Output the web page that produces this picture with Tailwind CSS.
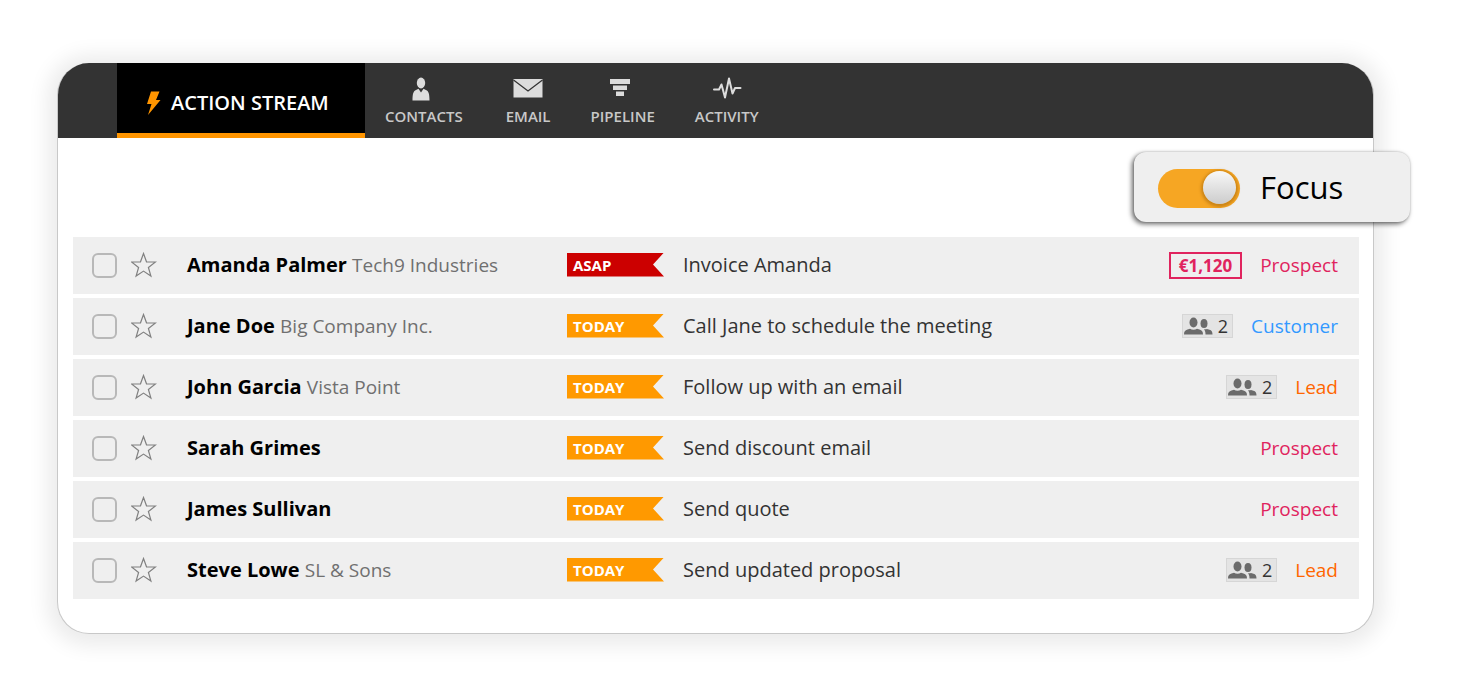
<!DOCTYPE html>
<html lang="en">
<head>
    <meta charset="UTF-8">
    <meta name="viewport" content="width=device-width, initial-scale=1">
    <title>Action Stream</title>
    <script src="https://cdn.jsdelivr.net/npm/@tailwindcss/browser@4"></script>
</head>
<body class="bg-white font-['Open_Sans',sans-serif] text-black pt-[63px] pb-[61px] pl-[57px] pr-[87px]">

    <!-- Shared icons -->
    <svg class="hidden">
        <symbol id="star" viewBox="0 0 26 26">
            <path fill="none" stroke="currentColor" stroke-width="1.2" stroke-linejoin="miter" d="M12.500 1.500l3 8.300 9 .2-7.100 5.500 2.500 8.500-7.400-4.900-7.400 4.900 2.500-8.500L.500 10l9-.2z" />
        </symbol>
        <symbol id="people" viewBox="0 0 29 18">
            <ellipse cx="9.500" cy="5.500" rx="4" ry="5" />
            <ellipse cx="20" cy="6.500" rx="3.500" ry="4.500" />
            <path d="M0 17.500c0-3 1-4.300 3.500-5l2.500-.8c2 1.500 5 1.500 7 0l2.500.8c2.500.7 3.500 2 3.500 5z" />
            <path d="M21.500 17.500c0-2.500-.5-4-1.500-5.300 1 .3 2 .2 3-.3l2.500.8c2 .6 3 2 3 4.800z" />
        </symbol>
    </svg>

    <main class="relative">
        <div class="overflow-hidden rounded-[32px] border border-[#c8c8c8] border-t-0 bg-white shadow-[0_2px_20px_10px_rgba(0,0,0,0.08)]">

            <!-- Top navigation -->
            <nav class="flex h-[75px] bg-[#333333] pl-[59px] text-[15px] leading-5 font-semibold text-[#c8c8c8]">
                <a href="#" class="flex w-[248px] items-center border-b-5 border-[#ff9500] bg-black pt-2.5 pl-7 text-xl text-white">
                    <svg class="mr-2 h-6 w-[18px]" viewBox="0 0 18 24" fill="#ff9500">
                        <path d="M6 0.500H14.500L11 9H15.500L3 24L6.500 13H2z" />
                    </svg>
                    <span>ACTION STREAM</span>
                </a>
                <a href="#" class="ml-5 flex flex-col items-center pt-3">
                    <svg class="mr-1.5 h-7 w-[30px]" viewBox="0 0 30 28" fill="#dcdcdc">
                        <ellipse cx="15" cy="8" rx="4.200" ry="5.400" />
                        <path d="M6.500 25.500c0-7 1-9.500 3.500-10.500l2.500-1.200L15 17.500l2.500-3.700L20 15c2.500 1 3.500 3.500 3.500 10.500z" />
                    </svg>
                    <span class="mt-[3px]">CONTACTS</span>
                </a>
                <a href="#" class="ml-[43px] flex flex-col items-center pt-3">
                    <svg class="h-7 w-[30px]" viewBox="0 0 30 28">
                        <path fill="#dcdcdc" d="M.5 4h29v18.500h-29z" />
                        <path fill="none" stroke="#333333" stroke-width="1.300" d="M.5 5L15 16 29.500 5" />
                    </svg>
                    <span class="mt-[3px]">EMAIL</span>
                </a>
                <a href="#" class="ml-10 flex flex-col items-center pt-3">
                    <svg class="mr-1.5 h-7 w-[30px]" viewBox="0 0 30 28" fill="#dcdcdc">
                        <path d="M5 4h20v5H5zM8 10.500h14v4.500H8zM11 16.500h8v4.500h-8z" />
                    </svg>
                    <span class="mt-[3px]">PIPELINE</span>
                </a>
                <a href="#" class="ml-10 flex flex-col items-center pt-3">
                    <svg class="h-7 w-[30px]" viewBox="0 0 30 28" fill="none" stroke="#dcdcdc" stroke-width="2" stroke-linejoin="round" stroke-linecap="round">
                        <path d="M2 14.500h5l2.500-5 3.500 13 4-19 3.500 15 2.500-5.500h5.500" />
                    </svg>
                    <span class="mt-[3px]">ACTIVITY</span>
                </a>
            </nav>

            <!-- Stream -->
            <ul class="flex flex-col gap-1 pt-[99px] pr-3.5 pb-[34px] pl-[15px] text-xl">
                <li class="flex h-[57px] items-center bg-[#efefef] pr-[21px] pb-0.5 pl-[19px]">
                    <input type="checkbox" aria-label="Select Amanda Palmer" class="mt-0.5 size-[25px] appearance-none rounded-md border-2 border-[#b8b8b8] checked:bg-[#b8b8b8]">
                    <button type="button" aria-label="Star Amanda Palmer" class="ml-3.5 text-[#808080]"><svg class="size-[26px]"><use href="#star" /></svg></button>
                    <div class="ml-[30px] w-[380px] shrink-0"><span class="font-bold">Amanda Palmer</span> <span class="text-[19px] text-[#707070]">Tech9 Industries</span></div>
                    <span class="h-6 w-[97px] shrink-0 bg-[#cc0000] pl-1.5 text-[15px] leading-6 font-bold text-white [clip-path:polygon(0_0,100%_0,86px_50%,100%_100%,0_100%)]">ASAP</span>
                    <span class="ml-[19px] flex-1 text-[#333333]">Invoice Amanda</span>
                    <span class="mt-0.5 mr-[18px] border-2 border-[#e0245e] px-2 text-[17px] leading-[23px] font-bold text-[#e0245e]">€1,120</span>
                    <span class="pt-0.5 text-[19px] text-[#e0245e]">Prospect</span>
                </li>
                <li class="flex h-[57px] items-center bg-[#efefef] pr-[21px] pb-0.5 pl-[19px]">
                    <input type="checkbox" aria-label="Select Jane Doe" class="mt-0.5 size-[25px] appearance-none rounded-md border-2 border-[#b8b8b8] checked:bg-[#b8b8b8]">
                    <button type="button" aria-label="Star Jane Doe" class="ml-3.5 text-[#808080]"><svg class="size-[26px]"><use href="#star" /></svg></button>
                    <div class="ml-[30px] w-[380px] shrink-0"><span class="font-bold">Jane Doe</span> <span class="text-[19px] text-[#707070]">Big Company Inc.</span></div>
                    <span class="h-6 w-[97px] shrink-0 bg-[#ff9900] pl-1.5 text-[15px] leading-6 font-bold text-white [clip-path:polygon(0_0,100%_0,86px_50%,100%_100%,0_100%)]">TODAY</span>
                    <span class="ml-[19px] flex-1 text-[#333333]">Call Jane to schedule the meeting</span>
                    <span class="mr-[18px] flex h-6 items-center border border-[#d6d6d6] bg-[#e4e4e4] pr-1 pl-px text-lg text-[#333333]"><svg class="mr-[5px] h-[18px] w-[29px]" fill="#6b6b6b"><use href="#people" /></svg>2</span>
                    <span class="pt-0.5 text-[19px] text-[#3399ff]">Customer</span>
                </li>
                <li class="flex h-[57px] items-center bg-[#efefef] pr-[21px] pb-0.5 pl-[19px]">
                    <input type="checkbox" aria-label="Select John Garcia" class="mt-0.5 size-[25px] appearance-none rounded-md border-2 border-[#b8b8b8] checked:bg-[#b8b8b8]">
                    <button type="button" aria-label="Star John Garcia" class="ml-3.5 text-[#808080]"><svg class="size-[26px]"><use href="#star" /></svg></button>
                    <div class="ml-[30px] w-[380px] shrink-0"><span class="font-bold">John Garcia</span> <span class="text-[19px] text-[#707070]">Vista Point</span></div>
                    <span class="h-6 w-[97px] shrink-0 bg-[#ff9900] pl-1.5 text-[15px] leading-6 font-bold text-white [clip-path:polygon(0_0,100%_0,86px_50%,100%_100%,0_100%)]">TODAY</span>
                    <span class="ml-[19px] flex-1 text-[#333333]">Follow up with an email</span>
                    <span class="mr-[18px] flex h-6 items-center border border-[#d6d6d6] bg-[#e4e4e4] pr-1 pl-px text-lg text-[#333333]"><svg class="mr-[5px] h-[18px] w-[29px]" fill="#6b6b6b"><use href="#people" /></svg>2</span>
                    <span class="pt-0.5 text-[19px] text-[#ff6600]">Lead</span>
                </li>
                <li class="flex h-[57px] items-center bg-[#efefef] pr-[21px] pb-0.5 pl-[19px]">
                    <input type="checkbox" aria-label="Select Sarah Grimes" class="mt-0.5 size-[25px] appearance-none rounded-md border-2 border-[#b8b8b8] checked:bg-[#b8b8b8]">
                    <button type="button" aria-label="Star Sarah Grimes" class="ml-3.5 text-[#808080]"><svg class="size-[26px]"><use href="#star" /></svg></button>
                    <div class="ml-[30px] w-[380px] shrink-0"><span class="font-bold">Sarah Grimes</span></div>
                    <span class="h-6 w-[97px] shrink-0 bg-[#ff9900] pl-1.5 text-[15px] leading-6 font-bold text-white [clip-path:polygon(0_0,100%_0,86px_50%,100%_100%,0_100%)]">TODAY</span>
                    <span class="ml-[19px] flex-1 text-[#333333]">Send discount email</span>
                    <span class="pt-0.5 text-[19px] text-[#e0245e]">Prospect</span>
                </li>
                <li class="flex h-[57px] items-center bg-[#efefef] pr-[21px] pb-0.5 pl-[19px]">
                    <input type="checkbox" aria-label="Select James Sullivan" class="mt-0.5 size-[25px] appearance-none rounded-md border-2 border-[#b8b8b8] checked:bg-[#b8b8b8]">
                    <button type="button" aria-label="Star James Sullivan" class="ml-3.5 text-[#808080]"><svg class="size-[26px]"><use href="#star" /></svg></button>
                    <div class="ml-[30px] w-[380px] shrink-0"><span class="font-bold">James Sullivan</span></div>
                    <span class="h-6 w-[97px] shrink-0 bg-[#ff9900] pl-1.5 text-[15px] leading-6 font-bold text-white [clip-path:polygon(0_0,100%_0,86px_50%,100%_100%,0_100%)]">TODAY</span>
                    <span class="ml-[19px] flex-1 text-[#333333]">Send quote</span>
                    <span class="pt-0.5 text-[19px] text-[#e0245e]">Prospect</span>
                </li>
                <li class="flex h-[57px] items-center bg-[#efefef] pr-[21px] pb-0.5 pl-[19px]">
                    <input type="checkbox" aria-label="Select Steve Lowe" class="mt-0.5 size-[25px] appearance-none rounded-md border-2 border-[#b8b8b8] checked:bg-[#b8b8b8]">
                    <button type="button" aria-label="Star Steve Lowe" class="ml-3.5 text-[#808080]"><svg class="size-[26px]"><use href="#star" /></svg></button>
                    <div class="ml-[30px] w-[380px] shrink-0"><span class="font-bold">Steve Lowe</span> <span class="text-[19px] text-[#707070]">SL &amp; Sons</span></div>
                    <span class="h-6 w-[97px] shrink-0 bg-[#ff9900] pl-1.5 text-[15px] leading-6 font-bold text-white [clip-path:polygon(0_0,100%_0,86px_50%,100%_100%,0_100%)]">TODAY</span>
                    <span class="ml-[19px] flex-1 text-[#333333]">Send updated proposal</span>
                    <span class="mr-[18px] flex h-6 items-center border border-[#d6d6d6] bg-[#e4e4e4] pr-1 pl-px text-lg text-[#333333]"><svg class="mr-[5px] h-[18px] w-[29px]" fill="#6b6b6b"><use href="#people" /></svg>2</span>
                    <span class="pt-0.5 text-[19px] text-[#ff6600]">Lead</span>
                </li>
            </ul>
        </div>

        <!-- Focus switch -->
        <label class="absolute top-[89px] -right-9 flex h-[70px] w-[276px] items-center gap-5 rounded-xl bg-[#efefef] pt-0.5 pl-6 text-[31px] shadow-[-2px_2px_5px_rgba(0,0,0,0.6),0_0_2px_rgba(0,0,0,0.2)]">
            <input type="checkbox" checked class="flex h-[39px] w-[82px] appearance-none items-center rounded-full bg-[#bbbbbb] px-1 pb-0.5 before:size-[33px] before:rounded-full before:bg-linear-to-b before:from-[#f8f8f8] before:to-[#cccccc] before:shadow-[0_1px_3px_2px_rgba(120,70,0,0.35)] before:content-[''] checked:justify-end checked:bg-[#f6a623]">
            <span class="pb-0.5">Focus</span>
        </label>
    </main>
</body>
</html>
